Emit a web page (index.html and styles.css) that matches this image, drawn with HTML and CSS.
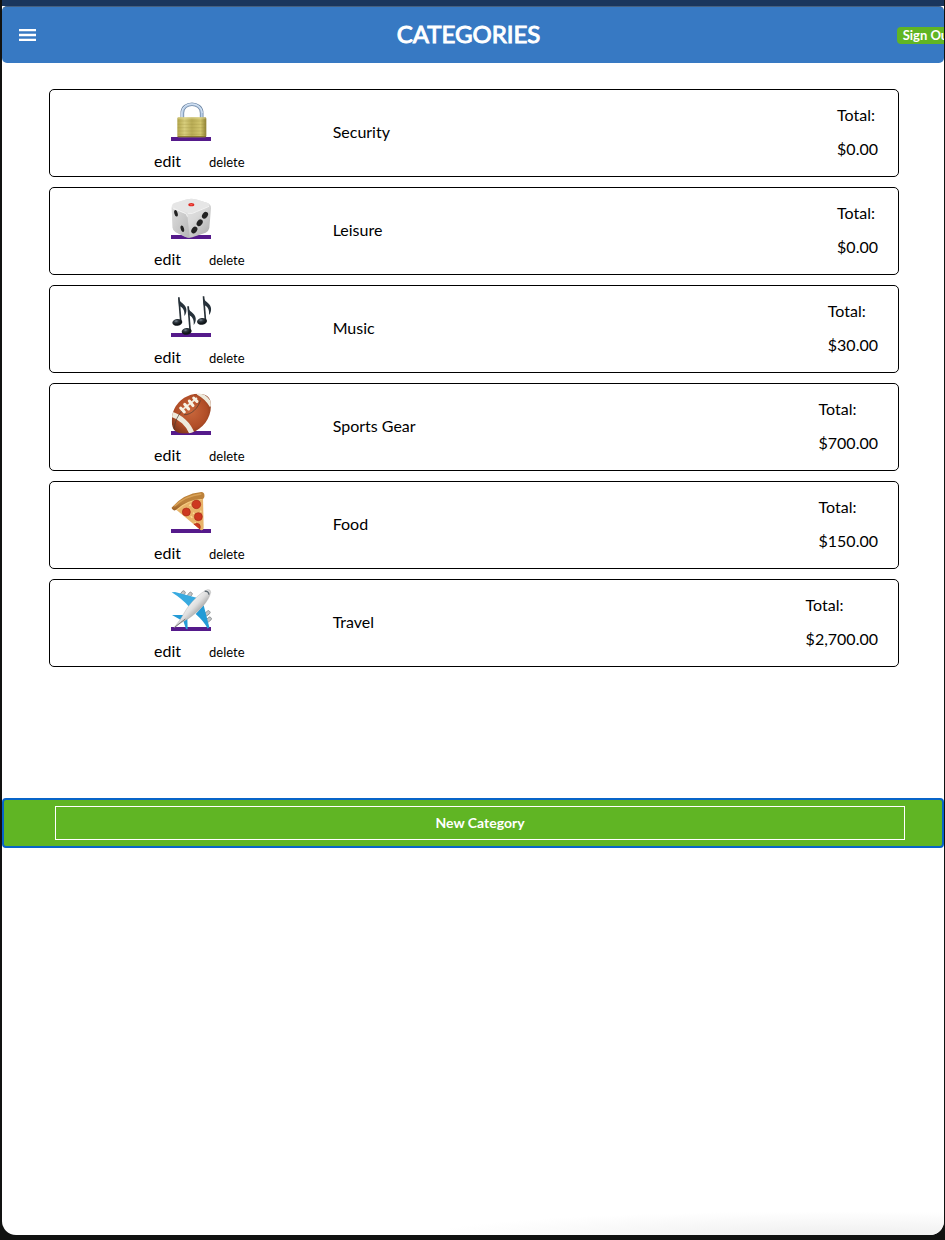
FILE: index.html
```html
<!DOCTYPE html>
<html lang="en">
<head>
<meta charset="utf-8">
<meta name="viewport" content="width=device-width, initial-scale=1">
<title>Categories</title>
<link rel="stylesheet" href="styles.css">
</head>
<body>
<div class="window">
  <header class="navbar">
    <button class="menu" type="button" aria-label="Menu">
      <svg width="17" height="12" viewBox="0 0 17 12" aria-hidden="true"><path d="M0 1h17M0 6h17M0 11h17" stroke="#fff" stroke-width="2.4"/></svg>
    </button>
    <h1 class="title">CATEGORIES</h1>
    <button class="sign-out" type="button">Sign Out</button>
  </header>
  <main class="content">
    <ul class="cards">
      <li class="card">
        <div class="tools">
          <a class="icon" href="#security" aria-label="Security">
            <svg viewBox="0 0 120 126" aria-hidden="true">
              <defs>
                <linearGradient id="brass"><stop offset="0" stop-color="#b3a64c"/><stop offset=".25" stop-color="#d8ce7d"/><stop offset=".5" stop-color="#b9ac55"/><stop offset=".8" stop-color="#d2c66e"/><stop offset="1" stop-color="#8f8132"/></linearGradient>
              </defs>
              <path class="underline" d="M0 114h120v12H0z"/>
              <path d="M34 58V42c0-35 58-35 58 0v16" fill="none" stroke="#7189a6" stroke-width="11"/>
              <path d="M34 58V42c0-35 58-35 58 0v16" fill="none" stroke="#b9cfe8" stroke-width="6"/>
              <path d="M32 58V42c0-36 60-36 62 0" fill="none" stroke="#edf5ff" stroke-width="2"/>
              <rect x="19" y="55" width="87" height="60" rx="4" fill="url(#brass)"/>
              <path d="M20 66h85M20 76h85M20 86h85M20 96h85M20 106h85" stroke="#92853a" stroke-width="2" opacity=".35"/>
              <path d="M21 57h83" stroke="#e9dfa0" stroke-width="2"/>
              <path d="M20 113h85" stroke="#827229" stroke-width="3"/>
            </svg>
          </a>
          <div class="actions"><a class="edit" href="#edit-security">edit</a><button class="delete" type="button">delete</button></div>
        </div>
        <h2 class="name">Security</h2>
        <div class="total"><p>Total:</p><p>$0.00</p></div>
      </li>
      <li class="card">
        <div class="tools">
          <a class="icon" href="#leisure" aria-label="Leisure">
            <svg viewBox="0 0 120 126" aria-hidden="true">
              <defs>
                <linearGradient id="die" x1="0" y1="0" x2="1" y2="1"><stop offset="0" stop-color="#ededed"/><stop offset=".55" stop-color="#d8d8d8"/><stop offset="1" stop-color="#a9a9a9"/></linearGradient>
                <linearGradient id="die-side" x1="0" y1="0" x2="1" y2="1"><stop offset="0" stop-color="#dedede"/><stop offset="1" stop-color="#b6b6b6"/></linearGradient>
              </defs>
              <path class="underline" d="M0 114h120v12H0z"/>
              <path d="M10 18 48 7q13-3 26 0l36 11q11 5 10 16l-5 59q-2 10-11 14l-40 14q-9 3-18-1L15 106q-9-5-10-13L2 33Q1 22 10 18z" fill="url(#die)"/>
              <path d="M3 29q1 5 7 8l32 13q7 3 8 12l6 60q-6 1-15-3L13 105q-7-4-8-12L2 33z" fill="url(#die-side)"/>
              <path d="M10 19 48 7q13-3 26 0l36 11q10 5 1 10L74 44q-15 8-31 1L9 30q-9-6 1-11z" fill="#e6e6e6"/>
              <path d="M7 34 43 49q5 2 6 10M50 49q14 3 26-5l38-16" fill="none" stroke="#f3f3f3" stroke-width="3"/>
              <ellipse cx="61" cy="23" rx="9" ry="5" fill="#dd2b24"/><ellipse cx="61" cy="23" rx="4" ry="2" fill="#ff6157"/>
              <g fill="#222"><ellipse cx="15" cy="49" rx="5" ry="10" transform="rotate(-15 15 49)"/><ellipse cx="34" cy="95" rx="5" ry="10" transform="rotate(-15 34 95)"/><ellipse cx="102" cy="55" rx="8" ry="11" transform="rotate(35 102 55)"/><ellipse cx="86" cy="77" rx="8" ry="11" transform="rotate(35 86 77)"/><ellipse cx="70" cy="99" rx="8" ry="11" transform="rotate(35 70 99)"/></g>
            </svg>
          </a>
          <div class="actions"><a class="edit" href="#edit-leisure">edit</a><button class="delete" type="button">delete</button></div>
        </div>
        <h2 class="name">Leisure</h2>
        <div class="total"><p>Total:</p><p>$0.00</p></div>
      </li>
      <li class="card">
        <div class="tools">
          <a class="icon" href="#music" aria-label="Music">
            <svg viewBox="0 0 120 126" aria-hidden="true">
              <defs>
                <radialGradient id="ink" cx=".4" cy=".3"><stop offset="0" stop-color="#7c8792"/><stop offset=".45" stop-color="#303940"/><stop offset="1" stop-color="#11161a"/></radialGradient>
                <g id="note">
                  <path d="M17 2h5l6 74h-5z" fill="#283138"/>
                  <path d="M18 2c2 16 21 19 24 35 1 8-1 15-6 21 2-18-4-25-16-31z" fill="#26313a"/>
                  <ellipse cx="15" cy="77" rx="15" ry="10" fill="url(#ink)" transform="rotate(-8 15 77)"/>
                </g>
              </defs>
              <path class="underline" d="M0 114h120v12H0z"/>
              <use href="#note" transform="translate(4 5)"/><use href="#note" transform="translate(78 2)"/><use href="#note" transform="translate(32 32)"/>
            </svg>
          </a>
          <div class="actions"><a class="edit" href="#edit-music">edit</a><button class="delete" type="button">delete</button></div>
        </div>
        <h2 class="name">Music</h2>
        <div class="total"><p>Total:</p><p>$30.00</p></div>
      </li>
      <li class="card">
        <div class="tools">
          <a class="icon" href="#sports-gear" aria-label="Sports Gear">
            <svg viewBox="0 0 120 126" aria-hidden="true">
              <defs>
                <radialGradient id="leather" cx=".5" cy=".45" r=".65"><stop offset="0" stop-color="#c9673c"/><stop offset=".6" stop-color="#b04d27"/><stop offset="1" stop-color="#743018"/></radialGradient>
                <clipPath id="ball"><path d="M3 75C6 32 46-2 91 3q21 2 27 20c9 42-18 84-57 96-26 7-51 1-56-17-3-8-3-17-2-27z"/></clipPath>
              </defs>
              <path class="underline" d="M0 114h120v12H0z"/>
              <g clip-path="url(#ball)">
                <path d="M0 0h121v123H0z" fill="url(#leather)"/>
                <path d="M-2 63c29 8 56 30 66 62" fill="none" stroke="#eeeadc" stroke-width="15"/>
                <path d="M80-1c17 9 32 22 42 40" fill="none" stroke="#eeeadc" stroke-width="12"/>
                <path d="M9 109c3-24 11-43 25-56M39 65c21 2 44-21 49-43" fill="none" stroke="#493b32" stroke-width="2"/>
              </g>
              <path d="M33 51 78 15" stroke="#eeeadc" stroke-width="5"/>
              <path d="m29 45 11 12m1-23 12 14m2-24 11 14M68 15l10 10" stroke="#f7f2e4" stroke-width="9" stroke-linecap="round"/>
            </svg>
          </a>
          <div class="actions"><a class="edit" href="#edit-sports-gear">edit</a><button class="delete" type="button">delete</button></div>
        </div>
        <h2 class="name">Sports Gear</h2>
        <div class="total"><p>Total:</p><p>$700.00</p></div>
      </li>
      <li class="card">
        <div class="tools">
          <a class="icon" href="#food" aria-label="Food">
            <svg viewBox="0 0 120 126" aria-hidden="true">
              <defs>
                <linearGradient id="crust" x1="0" y1="0" x2=".4" y2="1"><stop offset="0" stop-color="#b98035"/><stop offset=".6" stop-color="#bd823c"/><stop offset="1" stop-color="#8d511c"/></linearGradient>
                <clipPath id="slice"><path d="M13 54Q48 22 96 18l2 92q-2 11-10 6z"/></clipPath>
              </defs>
              <path class="underline" d="M0 114h120v12H0z"/>
              <path d="M13 54Q48 22 96 18l2 92q-2 11-10 6z" fill="#e8b369"/>
              <path d="M17 57Q50 27 92 24" fill="none" stroke="#f5cc80" stroke-width="4"/>
              <g clip-path="url(#slice)"><g fill="#cd3820" stroke="#a82a18" stroke-width="2"><circle cx="76" cy="40" r="13"/><circle cx="46" cy="63" r="12"/><circle cx="82" cy="77" r="12"/><circle cx="77" cy="108" r="11"/></g>
              <path d="m55 44 5-3m6 24 4 3m-11 8 5 4m24-21 3 3m-20 32 3 2" stroke="#ffdd95" stroke-width="4"/></g>
              <path d="M3 49Q37 8 91 3q11 0 9 15-1 7-9 6Q51 25 17 55q-6 6-11 1-6-4-3-7z" fill="url(#crust)"/>
              <path d="M10 46Q43 14 91 9" fill="none" stroke="#d9a257" stroke-width="4"/>
            </svg>
          </a>
          <div class="actions"><a class="edit" href="#edit-food">edit</a><button class="delete" type="button">delete</button></div>
        </div>
        <h2 class="name">Food</h2>
        <div class="total"><p>Total:</p><p>$150.00</p></div>
      </li>
      <li class="card">
        <div class="tools">
          <a class="icon" href="#travel" aria-label="Travel">
            <svg viewBox="0 0 120 126" aria-hidden="true">
              <defs>
                <linearGradient id="hull" x1=".3" y1=".3" x2=".7" y2=".7"><stop offset="0" stop-color="#fff"/><stop offset=".5" stop-color="#dedede"/><stop offset="1" stop-color="#8c8c8c"/></linearGradient>
              </defs>
              <path class="underline" d="M0 114h120v12H0z"/>
              <g fill="#c3c6c8" stroke="#777b7e" stroke-width="2"><rect x="30" y="5" width="10" height="18" rx="4" transform="rotate(38 35 14)"/><rect x="51" y="9" width="10" height="18" rx="4" transform="rotate(38 56 18)"/><rect x="104" y="64" width="10" height="18" rx="4" transform="rotate(50 109 73)"/><rect x="108" y="83" width="10" height="18" rx="4" transform="rotate(50 113 92)"/></g>
              <path d="M2 10 12 9l65 17-22 28Q34 30 2 10z" fill="#38aae0"/><path d="m74 75 24-26 17 66-5 4Q99 97 74 75z" fill="#249bd6"/>
              <path d="m3 78 36 0-8 16zM37 96l12-9 1 34-5-1z" fill="#249bd6"/>
              <path d="M9 116q20-24 31-45c16-29 47-60 69-69q10-2 10 8c-5 28-38 59-67 79-15 8-28 16-43 27z" fill="url(#hull)" stroke="#999" stroke-width="1"/>
              <path d="M101 7q11-2 13 10" fill="none" stroke="#606b73" stroke-width="4"/>
              <path d="M11 115q18-15 32-25" stroke="#777" stroke-width="3" fill="none"/>
            </svg>
          </a>
          <div class="actions"><a class="edit" href="#edit-travel">edit</a><button class="delete" type="button">delete</button></div>
        </div>
        <h2 class="name">Travel</h2>
        <div class="total"><p>Total:</p><p>$2,700.00</p></div>
      </li>
    </ul>
    <div class="new-bar"><button class="new-category" type="button">New Category</button></div>
  </main>
</div>
</body>
</html>
```
FILE: styles.css
```css
* { box-sizing: border-box; }

body {
  margin: 0;
  min-height: 100vh;
  display: flex;
  padding: 0 1px 5px 2px;
  background: #111211;
  color: #000;
  font-family: Lato, "Open Sans", sans-serif;
  font-size: 16px;
  line-height: 18px;
}

button {
  margin: 0;
  border: 0;
  padding: 0;
  background: none;
  color: inherit;
  font: inherit;
  cursor: pointer;
}

.window {
  flex: 1;
  min-width: 0;
  overflow: hidden;
  border-top: 6px solid #1a365d;
  border-radius: 0 0 14px 14px;
  background: radial-gradient(ellipse at 80% 100%, #efefef, #fff 70%) right bottom / 55% 24px no-repeat #fff;
}

.navbar {
  height: 57px;
  display: grid;
  grid-template-columns: 1fr auto 1fr;
  align-items: center;
  padding: 0 0 0 17px;
  border-top: 1px solid #456080;
  border-radius: 5px;
  background: #3779c3;
  color: #fff;
}

.menu {
  justify-self: start;
  display: flex;
}

.title {
  margin: 0;
  padding: 0 26px 2px 0;
  font-size: 24px;
  font-weight: 400;
  line-height: 30px;
  -webkit-text-stroke: 1px #fff;
}

.sign-out {
  justify-self: end;
  margin-right: -15px;
  padding: 0 6px;
  border-radius: 4px;
  background: #60b524;
  font-size: 13px;
  line-height: 17px;
  font-weight: 700;
}

.cards {
  display: grid;
  gap: 10px;
  margin: 0;
  padding: 26px 45px 0 47px;
  list-style: none;
}

.card {
  display: grid;
  grid-template-columns: 1fr 1fr 1fr;
  align-items: center;
  height: 88px;
  padding-bottom: 2px;
  border: 1px solid #000;
  border-radius: 5px;
}

.tools {
  display: flex;
  flex-direction: column;
  align-items: center;
  gap: 11px;
  padding-top: 5px;
}

.icon svg {
  display: block;
  width: 40px;
  height: 42px;
  overflow: visible;
}

.underline { fill: #551a8b; }

.actions {
  display: flex;
  align-items: baseline;
  gap: 28px;
  padding-left: 16px;
}

.edit {
  color: #000;
  text-decoration: none;
}

.delete { font-size: 13px; }

.name {
  margin: 0;
  font-size: 16px;
  font-weight: 400;
}

.total {
  justify-self: end;
  display: grid;
  gap: 16px;
  padding-right: 20px;
}

.total p { margin: 0; }

.new-bar {
  margin-top: 131px;
  padding: 6px 37px 6px 51px;
  border: 2px solid #0864c8;
  border-radius: 4px;
  background: #60b524;
}

.new-category {
  display: block;
  width: 100%;
  height: 34px;
  border: 1px solid #fff;
  color: #fff;
  font-size: 14px;
  font-weight: 700;
}
```
